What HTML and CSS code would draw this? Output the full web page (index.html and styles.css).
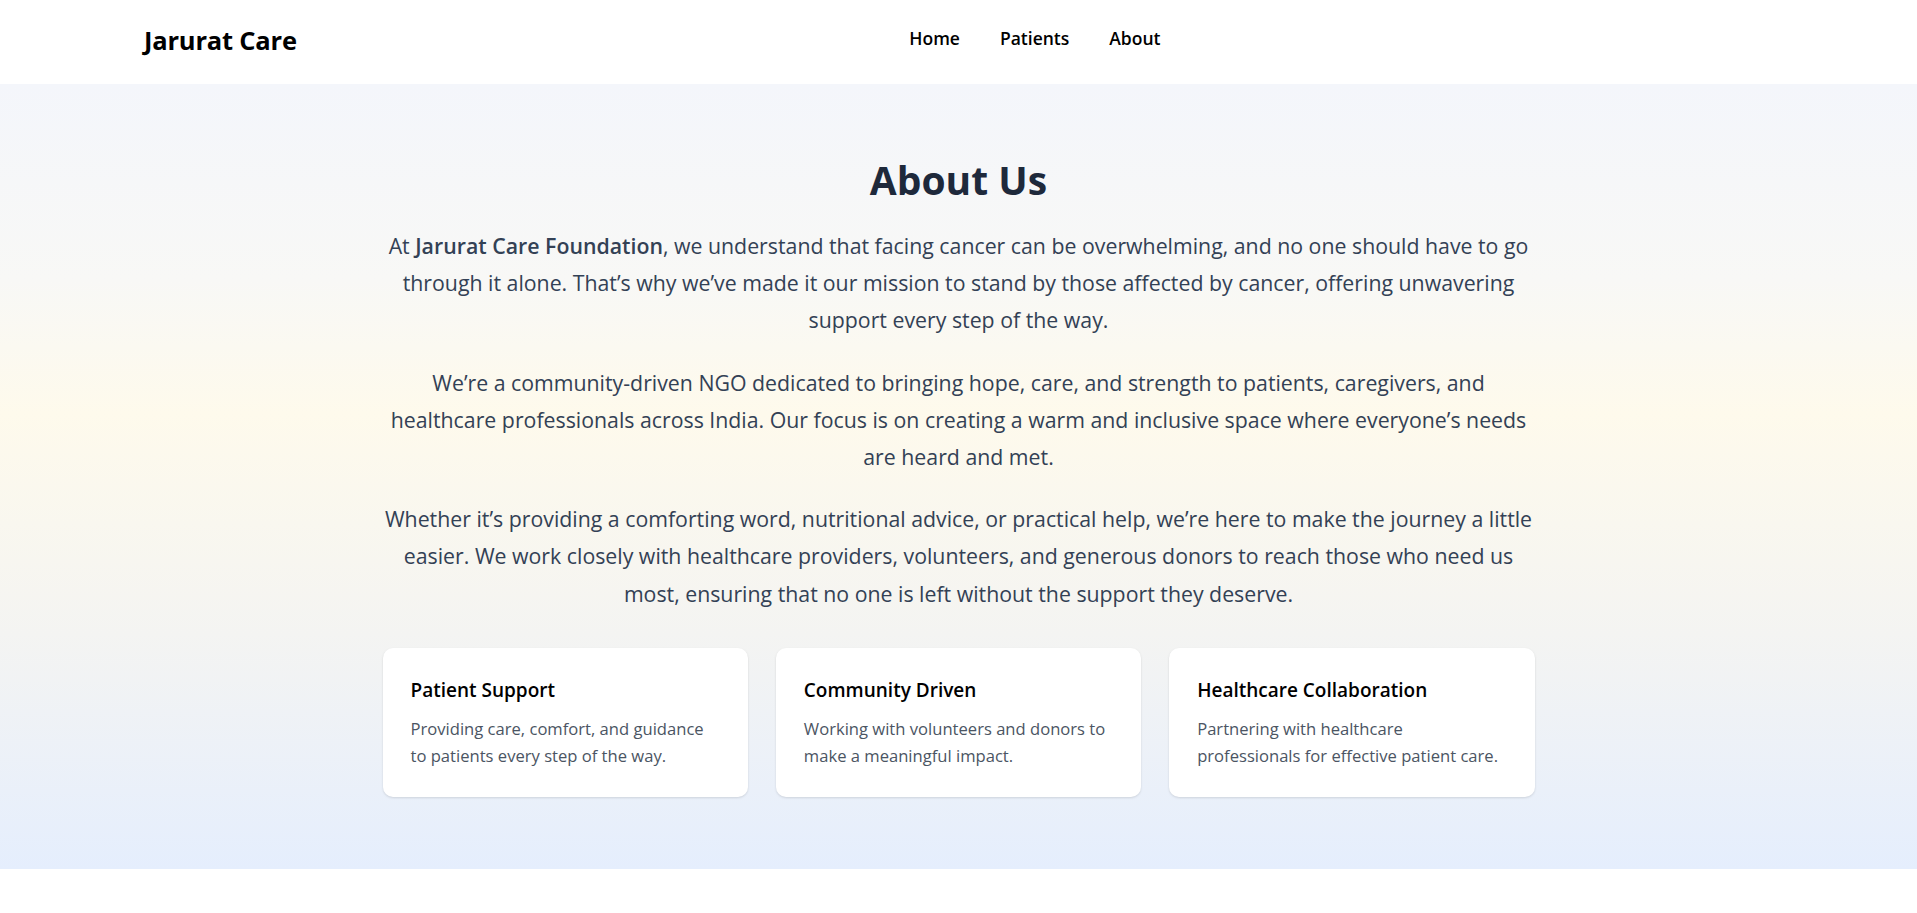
FILE: index.html
```html
<!DOCTYPE html>
<html lang="en">
<head>
<meta charset="utf-8">
<title>Jarurat Care - About</title>
<link rel="stylesheet" href="styles.css">
</head>
<body>
<header class="site-header">
  <div class="logo">Jarurat Care</div>
  <nav class="nav">
    <a href="#" class="nav-link">Home</a>
    <a href="#" class="nav-link">Patients</a>
    <a href="#" class="nav-link">About</a>
  </nav>
</header>
<main>
  <section class="about">
    <div class="about-inner">
      <h1 class="about-title">About Us</h1>
      <p class="about-text">At <strong>Jarurat Care Foundation</strong>, we understand that facing cancer can be overwhelming, and no one should have to go through it alone. That’s why we’ve made it our mission to stand by those affected by cancer, offering unwavering support every step of the way.</p>
      <p class="about-text">We’re a community-driven NGO dedicated to bringing hope, care, and strength to patients, caregivers, and healthcare professionals across India. Our focus is on creating a warm and inclusive space where everyone’s needs are heard and met.</p>
      <p class="about-text">Whether it’s providing a comforting word, nutritional advice, or practical help, we’re here to make the journey a little easier. We work closely with healthcare providers, volunteers, and generous donors to reach those who need us most, ensuring that no one is left without the support they deserve.</p>
      <div class="cards">
        <div class="card">
          <h3 class="card-title">Patient Support</h3>
          <p class="card-text">Providing care, comfort, and guidance to patients every step of the way.</p>
        </div>
        <div class="card">
          <h3 class="card-title">Community Driven</h3>
          <p class="card-text">Working with volunteers and donors to make a meaningful impact.</p>
        </div>
        <div class="card">
          <h3 class="card-title">Healthcare Collaboration</h3>
          <p class="card-text">Partnering with healthcare professionals for effective patient care.</p>
        </div>
      </div>
    </div>
  </section>
</main>
</body>
</html>
```
FILE: styles.css
```css
* { box-sizing: border-box; }
html, body { margin: 0; padding: 0; }
body {
  font-family: "Open Sans", "Noto Sans", sans-serif;
  background: #ffffff;
  color: #111827;
}
.site-header {
  height: 84px;
  display: flex;
  align-items: center;
  padding: 0 144px;
  background: #ffffff;
}
.logo {
  font-size: 25.5px;
  font-weight: 700;
  color: #000;
  letter-spacing: -0.2px;
  margin-top: -4px;
}
.nav {
  flex: 1;
  display: flex;
  justify-content: center;
  gap: 40px;
  margin-top: -8px;
}
.nav-link {
  font-size: 17.5px;
  font-weight: 600;
  color: #000;
  text-decoration: none;
}
.about {
  background: linear-gradient(to bottom, #f4f6fb 0%, #f8f8f6 25%, #fefaec 42%, #f4f4f2 70%, #e5eefd 100%);
  padding: 70px 0 72px;
}
.about-inner {
  max-width: 1152px;
  margin: 0 auto;
  text-align: center;
}
.about-title {
  margin: 0 0 21px;
  font-size: 39px;
  line-height: 52px;
  font-weight: 700;
  color: #1e293b;
}
.about-text {
  margin: 0 0 25px;
  font-size: 21.3px;
  line-height: 37.2px;
  color: #334155;
}
.about-text strong { font-weight: 600; }
.cards {
  display: grid;
  grid-template-columns: repeat(3, 1fr);
  gap: 28px;
  margin-top: 36px;
  text-align: left;
}
.card {
  background: #ffffff;
  border-radius: 10px;
  padding: 28px;
  box-shadow: 0 1px 3px rgba(0,0,0,0.08), 0 1px 2px rgba(0,0,0,0.05);
}
.card-title {
  margin: 0 0 10px;
  font-size: 19px;
  line-height: 29px;
  font-weight: 600;
  color: #000;
}
.card-text {
  margin: 0;
  font-size: 16.6px;
  line-height: 27px;
  color: #4b5563;
}
```
